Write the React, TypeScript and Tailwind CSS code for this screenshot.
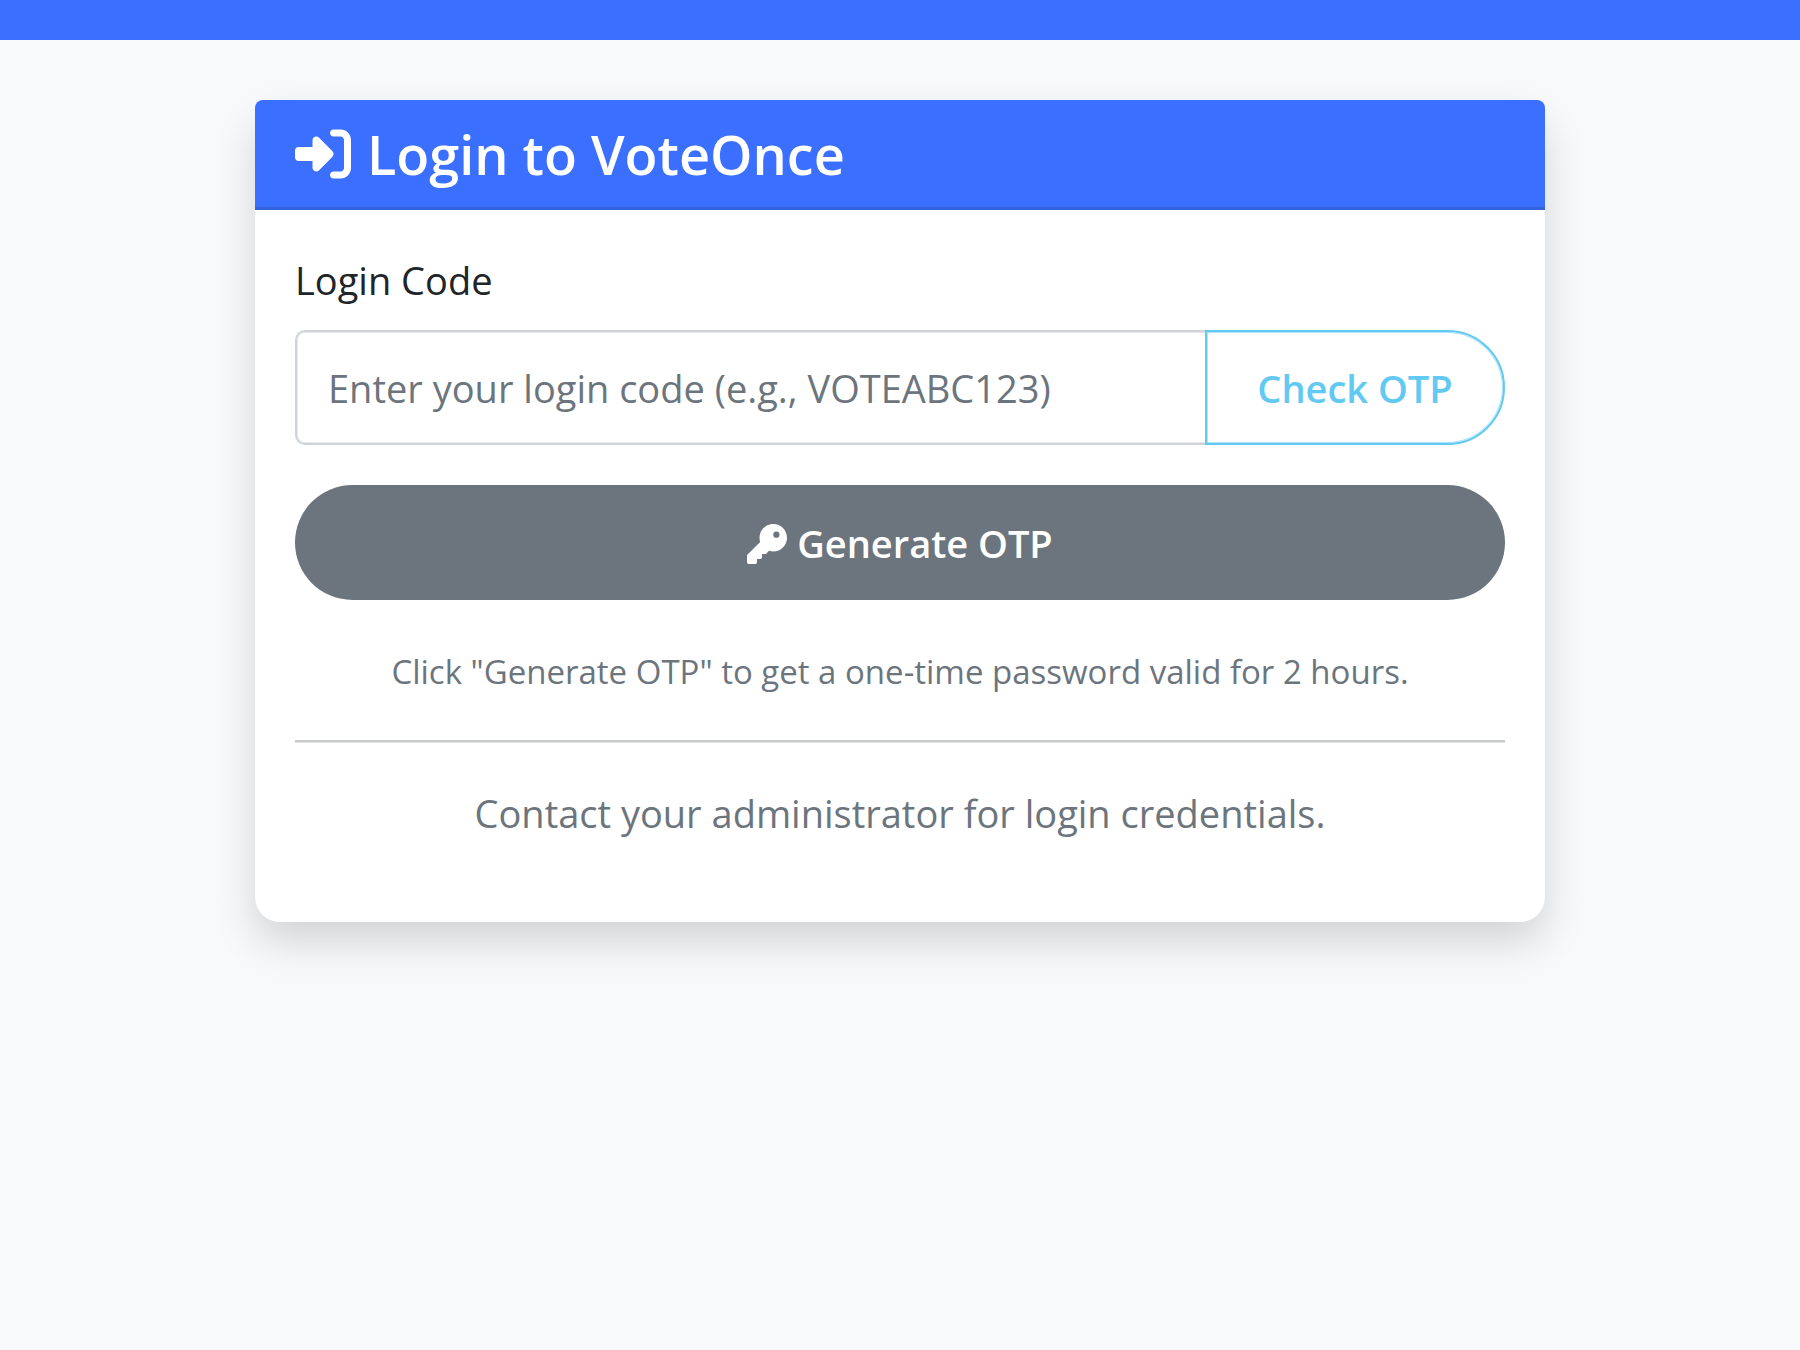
import { FaKey, FaRightToBracket } from "react-icons/fa6";

export default function App() {
  return (
    <div className="min-h-screen bg-[#f8f9fb] font-['Open_Sans','Noto_Sans',sans-serif] text-[#212529]">
      <nav className="h-10 bg-[#3a6fff]" aria-label="Main" />
      <main className="px-8 pt-15 pb-20">
        <section className="mx-auto max-w-[1290px] rounded-[25px] bg-white shadow-[0_20px_40px_rgba(0,0,0,0.15)]">
          <header className="rounded-t-lg border-b-3 border-[#3563dc] bg-[#3a6fff] px-10 pt-5 pb-[19px]">
            <h1 className="flex items-center gap-4 text-[54px] leading-[68px] font-semibold text-white">
              <FaRightToBracket className="size-14 shrink-0" />
              Login to VoteOnce
            </h1>
          </header>
          <form className="px-10 pt-10 pb-[78px]" onSubmit={(e) => e.preventDefault()}>
            <label htmlFor="login-code" className="block pb-5 text-[38px] leading-[60px]">
              Login Code
            </label>
            <div className="flex h-[115px]">
              <input
                id="login-code"
                type="text"
                placeholder="Enter your login code (e.g., VOTEABC123)"
                className="min-w-0 flex-1 rounded-l-[10px] border-2 border-r-0 border-[#ced4da] bg-white px-[31px] pt-0.5 text-[38px] shadow-[inset_1px_0_0_#e6e9ec,inset_0_1px_0_#e6e9ec,inset_0_-1px_0_#e6e9ec] placeholder:text-[#6c757d]"
              />
              <button
                type="button"
                className="w-[300px] shrink-0 rounded-r-full border-2 border-[#62c9f2] pt-0.5 text-[38px] font-semibold text-[#62c9f2] shadow-[inset_0_0_0_1px_#b0e4f8]"
              >
                Check OTP
              </button>
            </div>
            <button
              type="submit"
              className="mt-10 flex h-[115px] w-full items-center justify-center gap-2.5 rounded-full bg-[#6c757d] pt-0.5 text-[38px] font-semibold text-white"
            >
              <FaKey className="size-10" />
              Generate OTP
            </button>
            <p className="mt-11 text-center text-[33px] leading-[56px] text-[#6c757d]">
              Click &quot;Generate OTP&quot; to get a one-time password valid for 2 hours.
            </p>
            <hr className="my-10 border-t-2 border-[#c7c8c9] shadow-[0_1px_0_#e3e4e4]" />
            <p className="text-center text-[38px] leading-[62px] text-[#6c757d]">
              Contact your administrator for login credentials.
            </p>
          </form>
        </section>
      </main>
    </div>
  );
}
